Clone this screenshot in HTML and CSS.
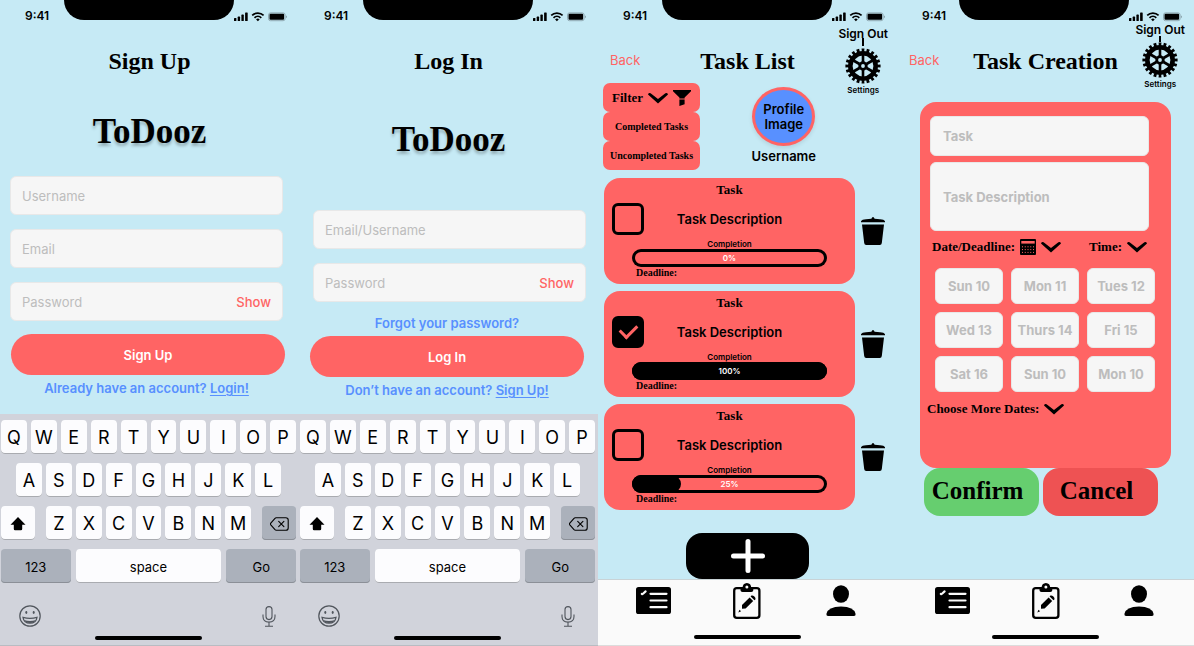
FILE: index.html
```html
<!DOCTYPE html>
<html lang="en">
<head>
<meta charset="utf-8">
<meta name="viewport" content="width=device-width, initial-scale=1">
<title>ToDooz</title>
<link rel="stylesheet" href="styles.css">
</head>
<body>
<svg class="sprite" aria-hidden="true">
  <symbol id="signals" viewBox="0 0 53 10">
    <g fill="#000"><rect x="0" y="6" width="2.4" height="3" rx=".6"/><rect x="3.7" y="4.6" width="2.4" height="4.4" rx=".6"/><rect x="7.4" y="2.6" width="2.4" height="6.4" rx=".6"/><rect x="11.1" y=".4" width="2.6" height="8.6" rx=".6"/></g>
    <path d="M18.2 3.4a8.2 8.2 0 0 1 11.4 0M20.5 5.8a4.9 4.9 0 0 1 6.8 0" fill="none" stroke="#000" stroke-width="1.7"/>
    <path d="M23.9 9.3l-1.8-1.9a2.6 2.6 0 0 1 3.6 0z"/>
    <rect x="34.5" y=".9" width="16.6" height="7.8" rx="2" fill="none" stroke="#8aa3ab" stroke-width=".9"/>
    <rect x="35.5" y="1.800" width="14.600" height="6" rx="1"/><path d="M52 3.4v2.8q1-.4 1-1.4t-1-1.4z" fill="#8aa3ab"/>
  </symbol>
  <symbol id="gear" viewBox="0 0 36 36">
    <g fill="none" stroke="#000">
      <circle cx="18" cy="18" r="15.8" stroke-width="3.6" pathLength="40" stroke-dasharray="1.1 .9" stroke-dashoffset=".55"/>
      <circle cx="18" cy="18" r="12.700" stroke-width="4.6"/>
      <circle cx="18" cy="18" r="3.300" stroke-width="2.800"/>
      <path d="M18 5v9M18 22v9M6.7 11.5l7.8 4.5M21.5 20l7.8 4.5M6.7 24.5l7.8-4.5M21.5 16l7.8-4.5" stroke-width="2.600"/>
    </g>
  </symbol>
  <symbol id="chevron" viewBox="0 0 20 12"><path d="M0 2.400Q.8 .4 2.600 1.300L10 7 17.400 1.300Q19.200 .4 20 2.400L10 11.600z"/></symbol>
  <symbol id="funnel" viewBox="0 0 18 16"><path d="M0 0h18v1.2L11.6 7.4v1H6.4v-1L0 1.2zM6.4 9.4h5.2v4.8l-5.2 1.8z"/></symbol>
  <symbol id="trash" viewBox="0 0 24 28"><path d="M0 4.2Q1 2.4 5 2.2l5.4-.5Q11 0 12 0t1.6 1.7l5.4.5q4 .2 5 2v1H0zM1 7.4h22L20.8 26q-.2 2-2 2H5.2q-1.800 0-2-2z"/></symbol>
  <symbol id="list" viewBox="0 0 35 27"><rect width="35" height="27" rx="2.600"/><path d="M14.500 6.800h16M14.500 13.500h16M14.500 20.200h16M5.800 7l.5.200M7 6.700l2.600-2.300" fill="none" stroke="#fafafa" stroke-width="2.200" stroke-linecap="round"/></symbol>
  <symbol id="clipboard" viewBox="0 0 28 36">
    <rect x="1.200" y="5.200" width="25.200" height="29.600" rx="2.600" fill="none" stroke="#000" stroke-width="2.300"/>
    <path d="M7.500 5h2q.2-4.800 4.400-5 4.200.2 4.400 5h2v2.200q0 1.800-2 1.800H9.500q-2 0-2-1.800z"/><circle cx="13.900" cy="4" r="1.500" fill="#fafafa"/>
    <path d="M9 22l7.600-7.600 3.600 3.600-7.600 7.600-3.600.2zM17.600 13.400l.8-.8q1.400-.6 3 1t1 3l-.9.700zM5.300 29.500l1.200-2.700 1.600 1.500z"/>
  </symbol>
  <symbol id="person" viewBox="0 0 30 32"><ellipse cx="15" cy="9" rx="8" ry="8.700"/><path d="M.4 29Q2 21.700 15 21.600 28 21.700 29.600 29q.2 2-1.600 2H2Q.2 31 .4 29z"/></symbol>
  <symbol id="calculator" viewBox="0 0 16 16"><rect width="16" height="16" rx="1"/><path d="M1.300 2h13.400v2.600H1.300z" fill="#ff6464"/><path d="M2 7.800h12M2 10.600h12M2 13.400h12" stroke="#ff6464" stroke-width="1" stroke-dasharray="1 1.750"/></symbol>
  <symbol id="shift" viewBox="0 0 16 14"><path d="M8 0l7.500 7.700h-3.300V12q0 1.300-1.300 1.300H5.100Q3.800 13.300 3.800 12V7.700H.5z"/></symbol>
  <symbol id="backspace" viewBox="0 0 19 14"><path d="M6.200.8h9.600q2.400 0 2.400 2.300v7.800q0 2.300-2.400 2.300H6.200q-.7 0-1.200-.5L.8 7.800q-.6-.8 0-1.600L5 1.300q.5-.5 1.200-.5zM8.700 4.400l5.200 5.200M13.900 4.400L8.700 9.600" fill="none" stroke="#000" stroke-width="1.100" stroke-linecap="round"/></symbol>
  <symbol id="emoji" viewBox="0 0 22 22"><circle cx="11" cy="11" r="10.200" fill="none" stroke="#50555c" stroke-width="1.200"/><ellipse cx="7.300" cy="7.500" rx="1" ry="1.400" fill="#50555c"/><ellipse cx="14.700" cy="7.500" rx="1" ry="1.400" fill="#50555c"/><path d="M4 12.300q7 2 14 0-.8 5.900-7 5.900t-7-5.900z" fill="none" stroke="#50555c" stroke-width="1.200"/><path d="M5 15q6 2.200 12 0-2 3-6 3t-6-3z" fill="#50555c"/></symbol>
  <symbol id="mic" viewBox="0 0 14 21"><rect x="4" y=".6" width="6" height="13" rx="3" fill="none" stroke="#50555c" stroke-width="1.100"/><path d="M1 8.500v2q0 5.600 6 5.600t6-5.600v-2M7 16v4M3 20.200h8" fill="none" stroke="#50555c" stroke-width="1.100"/></symbol>
</svg>

<div class="board">

  <section class="screen">
    <div class="status"><span class="time">9:41</span><span class="notch"></span><svg class="signals"><use href="#signals"/></svg></div>
    <header class="header"><span></span><h1 class="title">Sign Up</h1></header>
    <p class="brand">ToDooz</p>
    <form class="form">
      <input class="field" type="text" placeholder="Username" aria-label="Username">
      <input class="field" type="email" placeholder="Email" aria-label="Email">
      <div class="field field-group">
        <input class="field-input" type="password" placeholder="Password" aria-label="Password">
        <button class="show" type="button">Show</button>
      </div>
      <button class="submit submit-spaced" type="button">Sign Up</button>
      <p class="note">Already have an account? <a class="link" href="#">Login!</a></p>
    </form>
    <div class="keyboard">
      <div class="keys"><button class="key">Q</button><button class="key">W</button><button class="key">E</button><button class="key">R</button><button class="key">T</button><button class="key">Y</button><button class="key">U</button><button class="key">I</button><button class="key">O</button><button class="key">P</button></div>
      <div class="keys keys-inset"><button class="key">A</button><button class="key">S</button><button class="key">D</button><button class="key">F</button><button class="key">G</button><button class="key">H</button><button class="key">J</button><button class="key">K</button><button class="key">L</button></div>
      <div class="keys keys-split">
        <button class="key key-side" aria-label="Shift"><svg width="16" height="14"><use href="#shift"/></svg></button>
        <div class="keys keys-mid"><button class="key">Z</button><button class="key">X</button><button class="key">C</button><button class="key">V</button><button class="key">B</button><button class="key">N</button><button class="key">M</button></div>
        <button class="key key-side key-dark" aria-label="Delete"><svg width="19" height="14"><use href="#backspace"/></svg></button>
      </div>
      <div class="keys keys-wide"><button class="key key-word key-dark">123</button><button class="key key-word key-space">space</button><button class="key key-word key-dark">Go</button></div>
      <div class="extras"><svg width="22" height="22"><use href="#emoji"/></svg><svg width="14" height="21"><use href="#mic"/></svg></div>
      <div class="home"></div>
    </div>
  </section>

  <section class="screen">
    <div class="status"><span class="time">9:41</span><span class="notch"></span><svg class="signals"><use href="#signals"/></svg></div>
    <header class="header"><span></span><h1 class="title">Log In</h1></header>
    <p class="brand brand-login">ToDooz</p>
    <form class="form form-login">
      <div class="login-fields">
        <input class="field" type="text" placeholder="Email/Username" aria-label="Email or username">
        <div class="field field-group">
          <input class="field-input" type="password" placeholder="Password" aria-label="Password">
          <button class="show" type="button">Show</button>
        </div>
      </div>
      <a class="forgot" href="#">Forgot your password?</a>
      <button class="submit" type="button">Log In</button>
      <p class="note">Don’t have an account? <a class="link" href="#">Sign Up!</a></p>
    </form>
    <div class="keyboard">
      <div class="keys"><button class="key">Q</button><button class="key">W</button><button class="key">E</button><button class="key">R</button><button class="key">T</button><button class="key">Y</button><button class="key">U</button><button class="key">I</button><button class="key">O</button><button class="key">P</button></div>
      <div class="keys keys-inset"><button class="key">A</button><button class="key">S</button><button class="key">D</button><button class="key">F</button><button class="key">G</button><button class="key">H</button><button class="key">J</button><button class="key">K</button><button class="key">L</button></div>
      <div class="keys keys-split">
        <button class="key key-side" aria-label="Shift"><svg width="16" height="14"><use href="#shift"/></svg></button>
        <div class="keys keys-mid"><button class="key">Z</button><button class="key">X</button><button class="key">C</button><button class="key">V</button><button class="key">B</button><button class="key">N</button><button class="key">M</button></div>
        <button class="key key-side key-dark" aria-label="Delete"><svg width="19" height="14"><use href="#backspace"/></svg></button>
      </div>
      <div class="keys keys-wide"><button class="key key-word key-dark">123</button><button class="key key-word key-space">space</button><button class="key key-word key-dark">Go</button></div>
      <div class="extras"><svg width="22" height="22"><use href="#emoji"/></svg><svg width="14" height="21"><use href="#mic"/></svg></div>
      <div class="home"></div>
    </div>
  </section>

  <section class="screen">
    <div class="status"><span class="time">9:41</span><span class="notch"></span><svg class="signals"><use href="#signals"/></svg></div>
    <header class="header">
      <a class="back" href="#">Back</a><h1 class="title">Task List</h1>
      <div class="account"><a class="signout" href="#">Sign Out</a><span class="stem"></span><button class="gear" aria-label="Settings"><svg width="36" height="36"><use href="#gear"/></svg></button><span class="settings">Settings</span></div>
    </header>
    <div class="overview">
      <div class="filters">
        <button class="filter filter-main">Filter <svg width="20" height="12"><use href="#chevron"/></svg><svg width="18" height="16"><use href="#funnel"/></svg></button>
        <button class="filter">Completed Tasks</button>
        <button class="filter">Uncompleted Tasks</button>
      </div>
      <div class="profile"><div class="avatar">Profile Image</div><span class="username">Username</span></div>
    </div>
    <ul class="tasks">
      <li class="task-row">
        <article class="task">
          <h2 class="task-name">Task</h2>
          <label class="task-main"><input class="check" type="checkbox"><span>Task Description</span></label>
          <span class="completion">Completion</span>
          <div class="bar" role="progressbar" aria-valuenow="0"><span class="percent">0%</span></div>
          <span class="deadline">Deadline:</span>
        </article>
        <button class="trash" aria-label="Delete task"><svg width="24" height="28"><use href="#trash"/></svg></button>
      </li>
      <li class="task-row">
        <article class="task">
          <h2 class="task-name">Task</h2>
          <label class="task-main"><input class="check" type="checkbox" checked><span>Task Description</span></label>
          <span class="completion">Completion</span>
          <div class="bar" role="progressbar" aria-valuenow="100"><div class="fill" style="width:100%"></div><span class="percent">100%</span></div>
          <span class="deadline">Deadline:</span>
        </article>
        <button class="trash" aria-label="Delete task"><svg width="24" height="28"><use href="#trash"/></svg></button>
      </li>
      <li class="task-row">
        <article class="task">
          <h2 class="task-name">Task</h2>
          <label class="task-main"><input class="check" type="checkbox"><span>Task Description</span></label>
          <span class="completion">Completion</span>
          <div class="bar" role="progressbar" aria-valuenow="25"><div class="fill" style="width:25%"></div><span class="percent">25%</span></div>
          <span class="deadline">Deadline:</span>
        </article>
        <button class="trash" aria-label="Delete task"><svg width="24" height="28"><use href="#trash"/></svg></button>
      </li>
    </ul>
    <div class="dock">
      <button class="add" aria-label="Add task"><svg width="34" height="34" viewBox="0 0 34 34"><path d="M17 2.500v29M2.500 17h29" stroke="#fff" stroke-width="5" stroke-linecap="round"/></svg></button>
      <nav class="tabs">
        <a class="tab" href="#" aria-label="Tasks"><svg width="35" height="27"><use href="#list"/></svg></a>
        <a class="tab" href="#" aria-label="Create"><svg width="28" height="36"><use href="#clipboard"/></svg></a>
        <a class="tab" href="#" aria-label="Profile"><svg width="30" height="32"><use href="#person"/></svg></a>
      </nav>
      <div class="home"></div>
    </div>
  </section>

  <section class="screen">
    <div class="status"><span class="time">9:41</span><span class="notch"></span><svg class="signals"><use href="#signals"/></svg></div>
    <header class="header">
      <a class="back" href="#">Back</a><h1 class="title">Task Creation</h1>
      <div class="account account-high"><a class="signout" href="#">Sign Out</a><span class="stem"></span><button class="gear" aria-label="Settings"><svg width="36" height="36"><use href="#gear"/></svg></button><span class="settings">Settings</span></div>
    </header>
    <form class="creator">
      <div class="sheet">
        <div class="entries">
          <input class="entry" type="text" placeholder="Task" aria-label="Task">
          <textarea class="entry entry-tall" placeholder="Task Description" aria-label="Task Description"></textarea>
        </div>
        <div class="pickers">
          <button class="picker" type="button">Date/Deadline: <svg width="16" height="16"><use href="#calculator"/></svg><svg width="20" height="12"><use href="#chevron"/></svg></button>
          <button class="picker" type="button">Time: <svg width="20" height="12"><use href="#chevron"/></svg></button>
        </div>
        <div class="dates">
          <button class="date" type="button">Sun 10</button><button class="date" type="button">Mon 11</button><button class="date" type="button">Tues 12</button>
          <button class="date" type="button">Wed 13</button><button class="date" type="button">Thurs 14</button><button class="date" type="button">Fri 15</button>
          <button class="date" type="button">Sat 16</button><button class="date" type="button">Sun 10</button><button class="date" type="button">Mon 10</button>
        </div>
        <button class="picker more" type="button">Choose More Dates: <svg width="20" height="12"><use href="#chevron"/></svg></button>
      </div>
      <div class="actions"><button class="action confirm" type="button">Confirm</button><button class="action cancel" type="button">Cancel</button></div>
    </form>
    <div class="dock">
      <nav class="tabs">
        <a class="tab" href="#" aria-label="Tasks"><svg width="35" height="27"><use href="#list"/></svg></a>
        <a class="tab" href="#" aria-label="Create"><svg width="28" height="36"><use href="#clipboard"/></svg></a>
        <a class="tab" href="#" aria-label="Profile"><svg width="30" height="32"><use href="#person"/></svg></a>
      </nav>
      <div class="home"></div>
    </div>
  </section>
</div>
</body>
</html>
```

FILE: styles.css
```css
* { box-sizing: border-box; }
body { margin: 0; background: #c6eaf5; color: #000; font-family: Inter, "Liberation Sans", sans-serif; font-size: 13px; line-height: 16px; }
button, input, textarea { font: inherit; color: inherit; margin: 0; padding: 0; border: 0; background: none; }
button { cursor: pointer; }
a { color: inherit; text-decoration: none; }
h1, h2, p, ul { margin: 0; padding: 0; list-style: none; }
svg { display: block; flex: none; }
.sprite { position: absolute; width: 0; height: 0; }

.board { display: grid; grid-template-columns: 299fr 299fr 299fr 297fr; min-height: 100vh; }
.screen { display: flex; flex-direction: column; min-width: 0; }

.status { display: grid; grid-template-columns: 1fr 170px 1fr; height: 22px; }
.time { padding: 8px 0 0 25px; font-size: 12px; font-weight: 600; white-space: nowrap; }
.notch { height: 20px; background: #000; border-radius: 0 0 20px 20px; }
.signals { width: 53px; height: 10px; margin: 12px 12px 0 0; justify-self: end; }

.header { display: grid; grid-template-columns: 1fr auto 1fr; align-items: start; height: 55px; }
.title { margin-top: 23px; font: bold 24px/32px "Liberation Serif", serif; }
.back { margin: 30px 0 0 12px; color: #ff6464; }
.account { display: flex; flex-direction: column; align-items: center; justify-self: end; margin: 4px 9px 0 0; }
.account-high { margin-top: 0; }
.signout { font-size: 12px; font-weight: 600; line-height: 16px; white-space: nowrap; }
.stem { width: 2px; height: 8px; margin-top: -4px; background: #000; }
.gear { margin-top: 2px; }
.account-high .gear { margin-top: 0; }
.account-high .stem { height: 6px; margin-top: -2px; }
.settings { font-size: 8px; font-weight: 600; line-height: 12px; }

.brand { margin-top: 35px; text-align: center; font: bold 35px/40px "Liberation Serif", serif; text-shadow: 0 3px 3px rgba(0, 0, 0, .25); }
.brand-login { margin-top: 43px; }
.form { display: flex; flex-direction: column; gap: 14px; padding: 24px 16px 0 10px; }
.field { display: block; width: 100%; height: 39px; padding: 0 11px; border: 1px solid #e8e8e8; border-radius: 6px; background: #f6f6f6; }
.field-group { display: flex; align-items: center; }
.field-input { flex: 1; min-width: 0; }
::placeholder { color: #bdbdbd; opacity: 1; }
.show { color: #ff6464; font-weight: 500; }
.submit { height: 41px; border-radius: 21px; background: #ff6464; color: #fff; font-weight: 600; }
.submit-spaced { margin: -1px -2px 0 1px; }
.note { margin-top: -9px; text-align: center; color: #5890ff; font-weight: 600; }
.link { text-decoration: underline; text-underline-offset: 2px; }
.form-login { gap: 5px; padding: 50px 14px 0 11px; }
.form-login .note { margin-top: 0; }
.login-fields { display: grid; gap: 14px; padding-left: 3px; margin-right: -2px; }
.forgot { margin-top: 8px; text-align: center; color: #5890ff; font-weight: 600; }

.keyboard { display: flex; flex-direction: column; gap: 9px; margin-top: auto; padding: 6px 3px 5px 1px; background: #d1d3db; border-bottom: 1px solid #b9bcc2; }
.keys { display: flex; gap: 4px; }
.key { flex: 1; display: flex; align-items: center; justify-content: center; min-width: 0; height: 34px; padding-top: 1px; border-radius: 4px; background: #fcfcfe; box-shadow: inset 0 -1px #a9abb0; font-size: 18px; }
.keys-inset { padding: 0 15px; }
.keys-split { gap: 11px; }
.keys-mid { flex: 1; }
.key-side { flex: 0 0 34px; }
.key-dark { background: #abb1bb; box-shadow: inset 0 -1px #8b8f97; }
.key-word { font-size: 13px; }
.keys-wide { gap: 5px; }
.key-space { flex: 21; }
.keys-wide .key-dark { flex: 10; }
.extras { display: flex; align-items: center; justify-content: space-between; padding: 13px 20px 0 18px; }
.home { width: 107px; height: 4px; margin: 0 auto; border-radius: 2px; background: #000; }

.overview { display: flex; justify-content: space-between; padding: 6px 81px 0 5px; }
.filters { display: flex; flex-direction: column; width: 97px; }
.filter { height: 29px; border-radius: 7px; background: #ff6464; font: bold 10px/12px "Liberation Serif", serif; white-space: nowrap; }
.filter-main { display: flex; align-items: center; justify-content: center; gap: 5px; font-size: 13px; }
.profile { display: flex; flex-direction: column; align-items: center; padding-top: 4px; gap: 2px; }
.avatar { display: grid; place-items: center; width: 63px; height: 59px; border: 3px solid #ff6464; border-radius: 50%; background: #5890ff; text-align: center; font-weight: 600; line-height: 15px; box-shadow: 0 2px 4px rgba(0, 0, 0, .1); }
.username { font-weight: 600; }

.tasks { display: grid; gap: 7px; padding: 8px 12px 0 6px; }
.task-row { display: grid; grid-template-columns: 1fr 24px; gap: 6px; align-items: center; }
.task { padding: 4px 8px 5px; border-radius: 16px; background: #ff6464; }
.task-name { text-align: center; font: bold 13px/16px "Liberation Serif", serif; }
.task-main { display: grid; grid-template-columns: 32px 1fr 32px; align-items: center; margin: 5px 0 4px; text-align: center; font-weight: 600; }
.check { appearance: none; display: grid; place-items: center; width: 32px; height: 32px; margin: 0; border: 3px solid #000; border-radius: 6px; }
.check:checked { background: #000; }
.check:checked::before { content: ""; width: 8px; height: 14px; margin-bottom: 6px; border: solid #ff6464; border-width: 0 3px 3px 0; transform: rotate(45deg); }
.completion { display: block; text-align: center; font-size: 8px; font-weight: 600; line-height: 10px; }
.bar { display: grid; align-items: center; height: 18px; margin: 0 20px; border-radius: 9px; box-shadow: inset 0 0 0 3px #000; }
.fill, .percent { grid-area: 1 / 1; }
.fill { height: 18px; border-radius: 9px; background: #000; }
.percent { text-align: center; color: #fff; font-size: 8px; font-weight: 600; line-height: 12px; }
.deadline { display: block; margin-left: 24px; font: bold 10px/12px "Liberation Serif", serif; }

.dock { display: flex; flex-direction: column; margin-top: auto; background: #c6eaf5; }
.add { display: grid; place-items: center; align-self: center; width: 123px; height: 46px; border-radius: 16px; background: #000; }
.tabs { display: grid; grid-template-columns: repeat(3, 1fr); place-items: center; height: 56px; padding: 0 9px 14px; border-top: 1px solid #c9d3d6; background: #fafafa; }
.dock .home { box-sizing: content-box; width: 100%; height: 10px; border-radius: 0; border-bottom: 1px solid #dcdcdc; background: #fafafa; display: grid; justify-items: center; }
.dock .home::before { content: ""; width: 107px; height: 4px; border-radius: 2px; background: #000; }

.creator { padding: 25px 23px 0 23px; }
.sheet { min-height: 366px; padding: 14px 16px 0 15px; border-radius: 16px; background: #ff6464; }
.entries { display: grid; gap: 6px; margin: 0 6px 0 -5px; }
.entry { display: block; width: 100%; height: 40px; padding: 0 12px; border: 1px solid #e8e8e8; border-radius: 6px; background: #f6f6f6; font-weight: 700; resize: none; }
.entry-tall { height: 69px; padding-top: 26px; }
.pickers { display: flex; justify-content: space-between; margin: 8px 8px 13px -3px; }
.picker { display: flex; align-items: center; gap: 5px; font: bold 13px/16px "Liberation Serif", serif; }
.dates { display: grid; grid-template-columns: repeat(3, 1fr); gap: 8px; }
.date { height: 36px; border: 1px solid #e8e8e8; border-radius: 6px; background: #f6f6f6; color: #bdbdbd; font-weight: 700; white-space: nowrap; }
.more { margin: 9px 0 0 -8px; }
.actions { display: grid; grid-template-columns: 1fr 1fr; gap: 4px; padding: 0 13px 0 4px; }
.action { height: 48px; padding: 0 8px 3px 0; border-radius: 16px; font: bold 25px/32px "Liberation Serif", serif; }
.confirm { background: #66ce6f; }
.cancel { background: #ee5253; }
```
